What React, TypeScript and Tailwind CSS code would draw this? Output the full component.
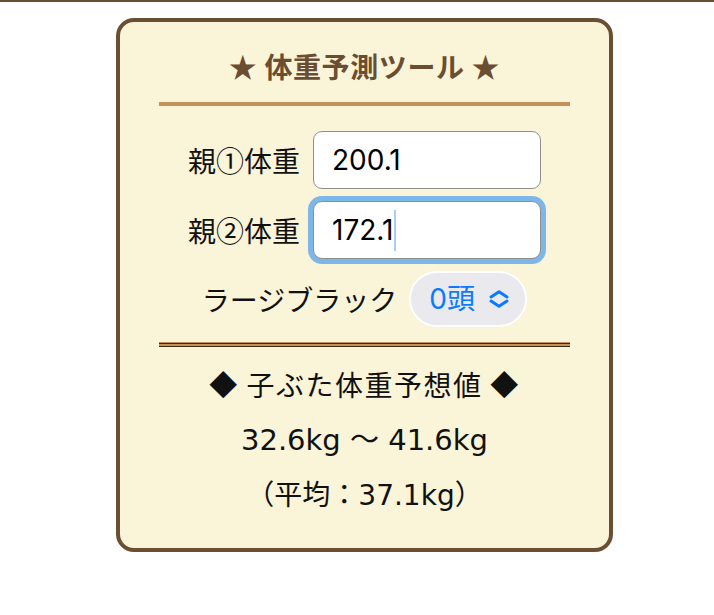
import React from 'react';

const jp = '"Noto Sans CJK JP", sans-serif';

const Field = ({ label, value, focused }: { label: string; value: string; focused?: boolean }) => (
  <div className='flex items-center justify-center gap-[13px]'>
    <span className='text-[28px] leading-none text-[#111]' style={{ fontFamily: jp }}>{label}</span>
    <div
      className={
        'flex h-[58px] w-[228px] items-center rounded-[9px] border-[1.5px] border-[#8f8f8f] bg-white pl-[18px] text-[28px] text-black ' +
        (focused ? 'ring-[5px] ring-[#7db6e9]' : '')
      }
      style={{ fontFamily: 'Inter, "Noto Sans CJK JP", sans-serif' }}
    >
      <span>{value}</span>
      {focused && <span className='ml-px inline-block h-[41px] w-[2px] bg-[#a9cdf4]'></span>}
    </div>
  </div>
);

export default function App() {
  return (
    <div className='min-h-[615px] bg-white'>
      <div className='h-[2px] bg-[#6b4e31]'></div>
      <div className='ml-[116px] mt-[16px] w-[497px] rounded-[18px] border-[4px] border-[#6b4f33] bg-[#faf4d8] px-[39px] pb-[24px] pt-[26px]'>
        <h1 className='text-center text-[28px] font-bold leading-[36px] tracking-[0.6px] text-[#6b4e31]' style={{ fontFamily: jp }}>
          ★ 体重予測ツール ★
        </h1>
        <div className='mt-[18px] h-[4px] bg-[#c4915a]'></div>

        <div className='mt-[25px] flex flex-col gap-[12px]'>
          <Field label='親①体重' value='200.1' />
          <Field label='親②体重' value='172.1' focused />
          <div className='flex items-center justify-center gap-[12px]'>
            <span className='text-[28px] leading-none text-[#111]' style={{ fontFamily: jp }}>ラージブラック</span>
            <div className='flex h-[56px] w-[118px] items-center gap-[13px] rounded-full border-2 border-white bg-[#e9e9ee] pl-[18px]'>
              <span className='text-[28px] leading-none text-[#0a7aff]' style={{ fontFamily: 'Inter, "Noto Sans CJK JP", sans-serif' }}>0頭</span>
              <svg width='22' height='18' viewBox='0 0 22 18' fill='none' stroke='#0a7aff' strokeWidth='3' strokeLinecap='round' strokeLinejoin='round'>
                <path d='M3 7 L11 1.8 L19 7' />
                <path d='M3 11 L11 16.2 L19 11' />
              </svg>
            </div>
          </div>
        </div>

        <div className='mt-[15px] h-px bg-[#c4915a]'></div>
        <div className='h-[4px] border-y border-[#3a2816] bg-[#c4915a]'></div>

        <div className='mt-[9px] text-center text-[29px] leading-[56px] text-[#111]' style={{ fontFamily: '"DejaVu Sans", "Noto Sans CJK JP", sans-serif' }}>
          <p style={{ fontFamily: jp }} className='text-[28px] tracking-[1.5px]'>◆ 子ぶた体重予想値 ◆</p>
          <p>32.6kg 〜 41.6kg</p>
          <p className='text-[28px]'>（平均：37.1kg）</p>
        </div>
      </div>
    </div>
  );
}
